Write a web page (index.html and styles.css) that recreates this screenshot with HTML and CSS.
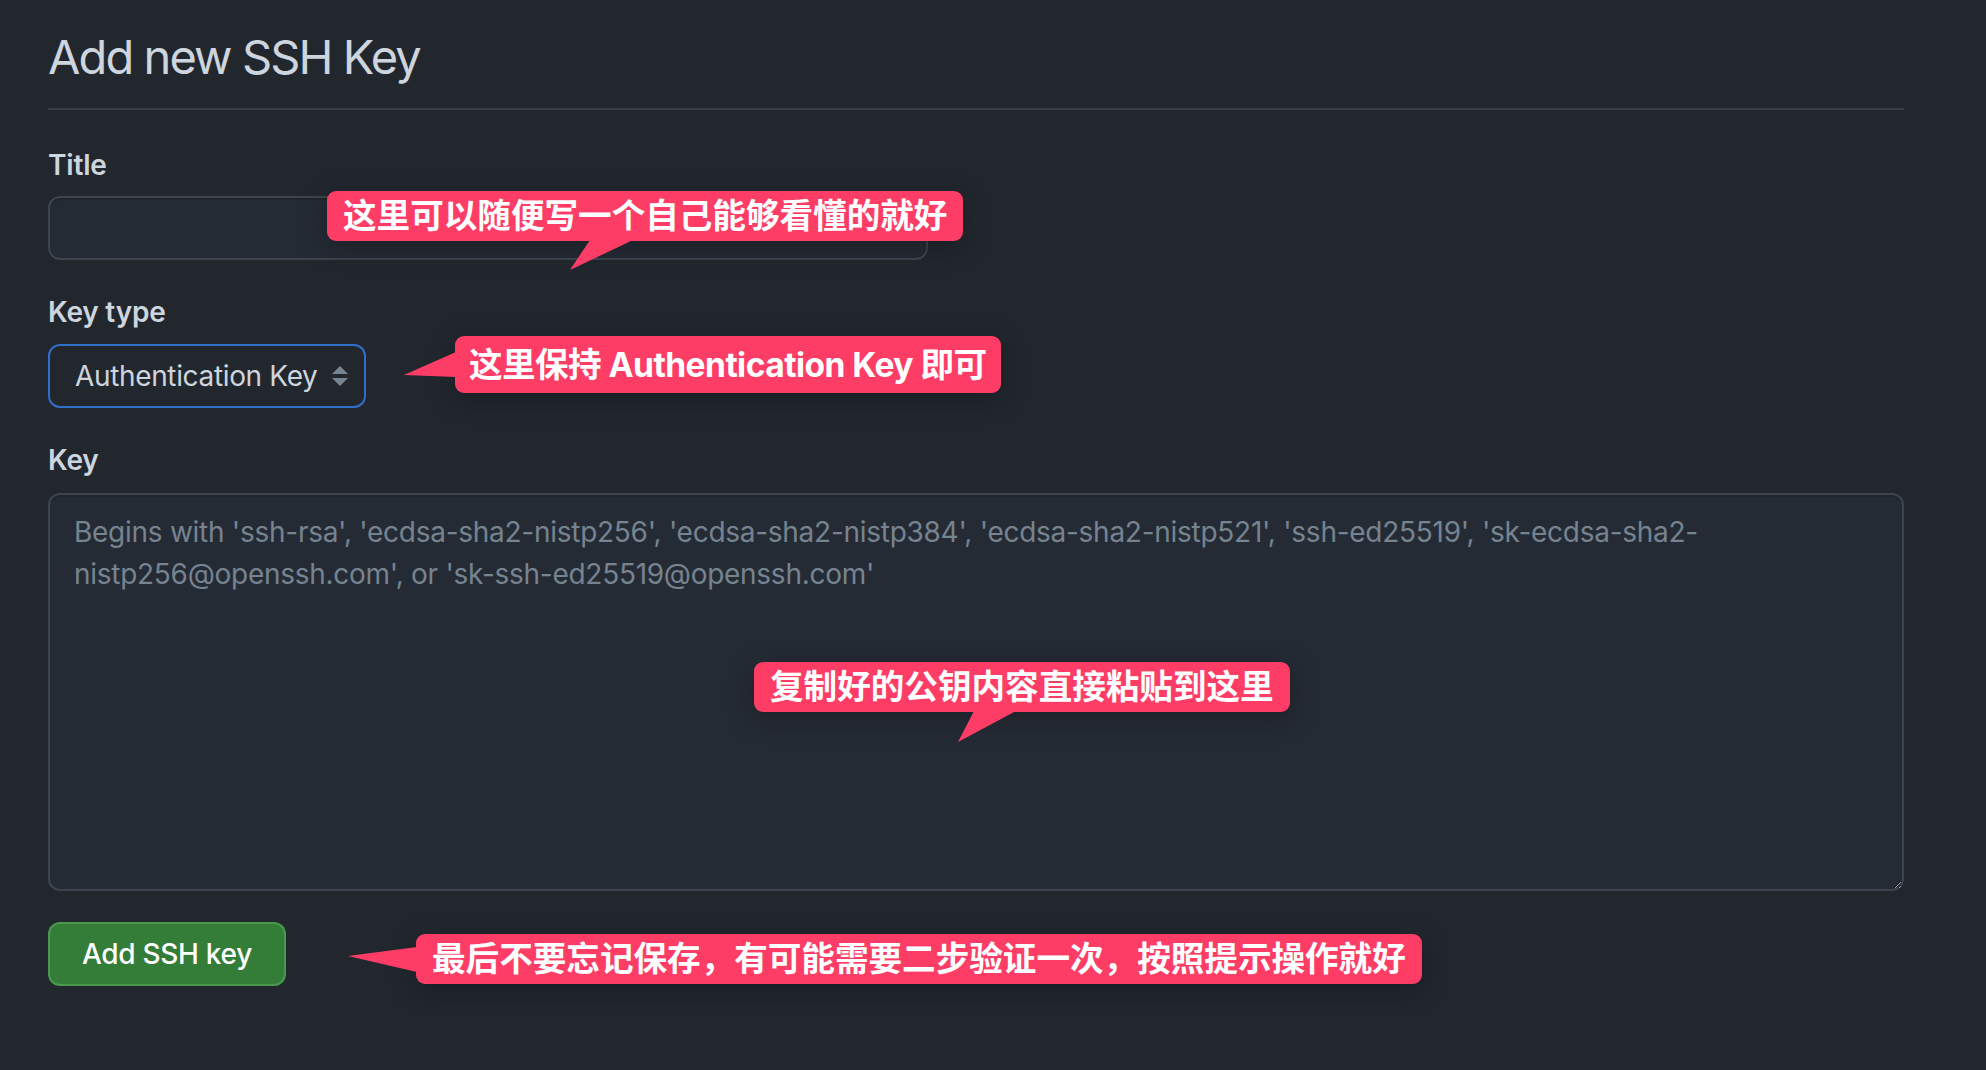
FILE: index.html
```html
<!DOCTYPE html>
<html lang="zh-CN">
<head>
<meta charset="utf-8">
<title>Add new SSH Key</title>
<link rel="stylesheet" href="styles.css">
</head>
<body>
<div class="page">
  <div class="subhead">
    <h2 class="subhead-heading">Add new SSH Key</h2>
  </div>
  <form class="ssh-form">
    <div class="form-group first">
      <label class="form-label" for="title">Title</label>
      <input class="form-control title-input" id="title" type="text">
    </div>
    <div class="form-group">
      <label class="form-label">Key type</label>
      <div class="select-box">
        <span class="select-text">Authentication Key</span>
        <svg class="select-arrows" width="16" height="20" viewBox="0 0 16 20"><path d="M8 0 L16 8 L0 8 Z" fill="#768390"/><path d="M0 12 L16 12 L8 20 Z" fill="#768390"/></svg>
      </div>
    </div>
    <div class="form-group">
      <label class="form-label" for="key">Key</label>
      <textarea class="form-control key-area" id="key" placeholder="Begins with 'ssh-rsa', 'ecdsa-sha2-nistp256', 'ecdsa-sha2-nistp384', 'ecdsa-sha2-nistp521', 'ssh-ed25519', 'sk-ecdsa-sha2-nistp256@openssh.com', or 'sk-ssh-ed25519@openssh.com'"></textarea>
    </div>
    <div class="actions">
      <button type="button" class="btn-primary">Add SSH key</button>
    </div>
  </form>

  <div class="note note-title">这里可以随便写一个自己能够看懂的就好</div>
  <div class="note note-type">这里保持 Authentication Key 即可</div>
  <div class="note note-key">复制好的公钥内容直接粘贴到这里</div>
  <div class="note note-save">最后不要忘记保存，有可能需要二步验证一次，按照提示操作就好</div>
</div>
</body>
</html>
```

FILE: styles.css
```css
* { box-sizing: border-box; }
html, body {
  margin: 0;
  padding: 0;
  background: #22272e;
}
body {
  font-family: Inter, "Liberation Sans", "Noto Sans CJK SC", sans-serif;
  color: #cdd5df;
  width: 1986px;
  height: 1070px;
  overflow: hidden;
}
.page {
  position: relative;
  padding: 27px 0 0 48px;
  width: 1904px;
}
.subhead {
  border-bottom: 2px solid #373e47;
  padding-bottom: 21px;
}
.subhead-heading {
  margin: 0;
  font-size: 47px;
  line-height: 60px;
  font-weight: 400;
  letter-spacing: -1.9px;
  color: #cdd5df;
}
.ssh-form {
  display: flex;
  flex-direction: column;
  padding-top: 34px;
}
.form-group {
  display: flex;
  flex-direction: column;
  align-items: flex-start;
  margin-bottom: 31px;
}
.form-label {
  font-size: 28px;
  line-height: 42px;
  font-weight: 600;
  color: #cdd5df;
  margin-bottom: 10px;
  letter-spacing: -0.2px;
}
.form-control {
  font-family: Inter, "Liberation Sans", sans-serif;
  background: #252b34;
  border: 2px solid #3d444e;
  border-radius: 12px;
  box-shadow: inset 0 2px 0 rgba(28, 33, 40, 0.6);
  color: #adbac7;
  outline: none;
}
.title-input {
  width: 880px;
  height: 64px;
}
.select-box {
  width: 318px;
  height: 64px;
  border: 2px solid #316dca;
  border-radius: 12px;
  background: #22272e;
  display: flex;
  align-items: center;
  justify-content: space-between;
  padding: 0 16px 0 25px;
  margin-top: 1px;
}
.select-text {
  font-size: 28px;
  color: #cdd5df;
  letter-spacing: -0.35px;
}
.select-arrows { display: block; }
.key-area {
  width: 1856px;
  height: 398px;
  padding: 16px 24px;
  font-size: 28px;
  line-height: 42px;
  resize: vertical;
  margin-top: 2px;
}
.key-area::placeholder {
  color: #768390;
  letter-spacing: -0.27px;
}
.actions {
  display: flex;
  padding-top: 0;
}
.btn-primary {
  font-family: Inter, "Liberation Sans", sans-serif;
  height: 64px;
  padding: 0 32px;
  background: #347d39;
  color: #ffffff;
  border: 2px solid #46954a;
  border-color: rgba(87, 171, 90, 0.6);
  border-radius: 12px;
  font-size: 28px;
  font-weight: 500;
  letter-spacing: -0.3px;
  cursor: pointer;
}

/* annotation callouts */
.note {
  position: absolute;
  background: #fd3d66;
  color: #ffffff;
  font-family: Inter, "Noto Sans CJK SC", sans-serif;
  font-weight: 700;
  font-size: 33.6px;
  height: 50px;
  line-height: 50px;
  padding: 0 16px;
  border-radius: 9px;
  white-space: nowrap;
  box-shadow: 0 6px 24px rgba(10, 12, 16, 0.35);
}
.note::after {
  content: "";
  position: absolute;
  background: #fd3d66;
}
.note-title { left: 327px; top: 191px; }
.note-title::after {
  left: 243px; top: 49px; width: 63px; height: 30px;
  clip-path: polygon(20px 0, 63px 0, 0 30px);
}
.note-type { left: 455px; top: 336px; height: 57px; line-height: 57px; padding: 0 14px; letter-spacing: -0.55px; }
.note-type::after {
  left: -51px; top: 16px; width: 52px; height: 25px;
  clip-path: polygon(52px 0, 52px 25px, 0 23px);
}
.note-key { left: 754px; top: 662px; }
.note-key::after {
  left: 204px; top: 49px; width: 58px; height: 31px;
  clip-path: polygon(16px 0, 58px 0, 0 31px);
}
.note-save { left: 416px; top: 934px; }
.note-save::after {
  left: -68px; top: 13px; width: 69px; height: 25px;
  clip-path: polygon(69px 0, 69px 25px, 0 9px);
}
```
